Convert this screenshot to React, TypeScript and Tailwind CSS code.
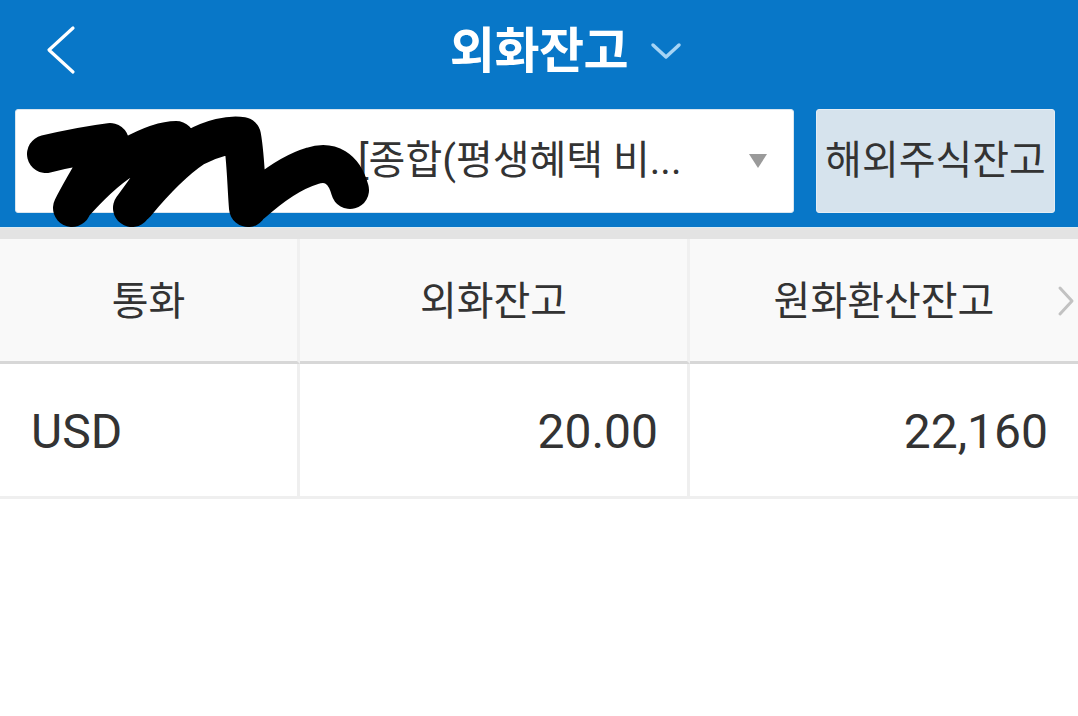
const font = "font-['Roboto','Noto_Sans_CJK_KR',sans-serif]";

function Scribble() {
  return (
    <svg
      className="pointer-events-none absolute left-0 top-0 overflow-visible"
      width="345"
      height="120"
      viewBox="0 0 345 120"
    >
      <path
        d="M30 44 C55 38 78 34 94 32 C82 52 66 78 56 98 M60 92 C80 70 98 54 114 46 C132 36 150 30 160 30 C150 52 132 76 116 98 M120 94 C140 70 160 50 178 38 C196 28 214 24 226 26 C230 48 230 74 232 98 M236 94 C256 76 276 62 296 56 C314 50 328 58 334 80"
        fill="none"
        stroke="#000"
        strokeWidth="38"
        strokeLinecap="round"
        strokeLinejoin="round"
      />
    </svg>
  );
}

export default function App() {
  return (
    <div className={`${font} w-[1078px] h-[716px] bg-white overflow-hidden`}>
      {/* blue header */}
      <div className="bg-[#0877c8]">
        <div className="relative h-[100px] flex items-center justify-center">
          <svg className="absolute left-[44px] top-[24px]" width="34" height="52" viewBox="0 0 34 52">
            <polyline points="29,4 5,26 29,48" fill="none" stroke="#fff" strokeWidth="3.2" strokeLinecap="round" strokeLinejoin="round" />
          </svg>
          <div className="relative mt-[2px]">
            <h1 className="text-[49px] font-bold text-white tracking-[-0.5px] leading-none">외화잔고</h1>
            <svg className="absolute left-[199px] top-[13px]" width="34" height="22" viewBox="0 0 34 22">
              <polyline points="4,5 17,17 30,5" fill="none" stroke="#a6d4f5" strokeWidth="3.5" strokeLinecap="round" strokeLinejoin="round" />
            </svg>
          </div>
        </div>
        <div className="flex gap-[22px] pl-[15px] pr-[23px] pt-[9px] pb-[14px]">
          <div className="relative flex-1 h-[104px] bg-white rounded-[3px] border border-[#d9e6ef] flex items-center pr-[26px]">
            <div className="relative w-[342px] self-stretch">
              <Scribble />
            </div>
            <span className="text-[40px] text-[#333] leading-none whitespace-nowrap">[종합(평생혜택 비...</span>
            <span className="ml-auto w-0 h-0 border-l-[9px] border-r-[9px] border-t-[14px] border-l-transparent border-r-transparent border-t-[#9a9a9a]" />
          </div>
          <button className="w-[239px] h-[104px] bg-[#d6e3ed] rounded-[3px] border border-[#e4edf4] text-[40px] text-[#333] leading-none">
            해외주식잔고
          </button>
        </div>
      </div>
      <div className="h-[12px] bg-[#e3e3e3] border-t border-[#dcecf4]" />

      {/* table */}
      <div className="grid grid-cols-[300px_390px_1fr]">
        <div className="h-[125px] pt-[4px] bg-[#f9f9f9] border-r-[3px] border-[#f0f0f0] border-b-[3px] border-b-[#d7d7d7] flex items-center justify-center text-[40px] text-[#333]">
          통화
        </div>
        <div className="h-[125px] pt-[4px] bg-[#f9f9f9] border-r-[3px] border-[#f0f0f0] border-b-[3px] border-b-[#d7d7d7] flex items-center justify-center text-[40px] text-[#333]">
          외화잔고
        </div>
        <div className="relative h-[125px] pt-[4px] bg-[#f9f9f9] border-b-[3px] border-[#d7d7d7] flex items-center justify-center text-[40px] text-[#333]">
          원화환산잔고
          <svg className="absolute right-[2px] top-[46px]" width="20" height="32" viewBox="0 0 20 32">
            <polyline points="4,3 16,16 4,29" fill="none" stroke="#c2c2c2" strokeWidth="3" strokeLinecap="round" strokeLinejoin="round" />
          </svg>
        </div>

        <div className="h-[135px] pt-[4px] border-r-[3px] border-[#efefef] border-b-[3px] border-b-[#efefef] flex items-center pl-[31px] text-[48px] text-[#333]">
          USD
        </div>
        <div className="h-[135px] pt-[4px] border-r-[3px] border-[#efefef] border-b-[3px] border-b-[#efefef] flex items-center justify-end pr-[29px] text-[48px] text-[#333]">
          20.00
        </div>
        <div className="h-[135px] pt-[4px] border-b-[3px] border-[#efefef] flex items-center justify-end pr-[30px] text-[48px] text-[#333]">
          22,160
        </div>
      </div>
    </div>
  );
}
